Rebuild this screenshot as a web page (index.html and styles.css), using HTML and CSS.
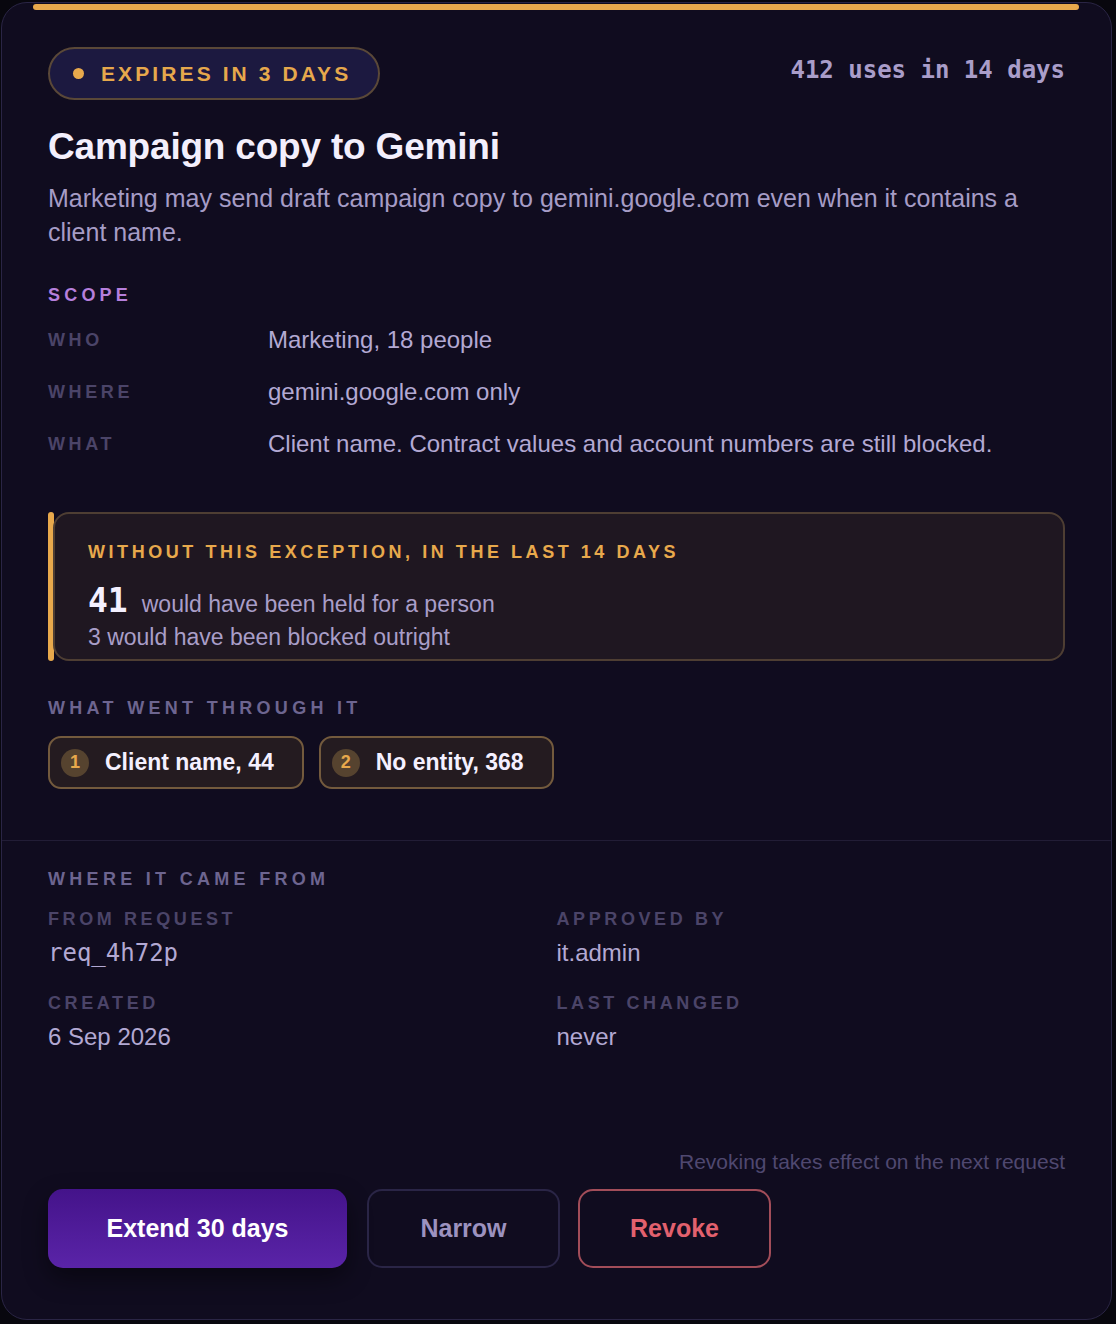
FILE: index.html
```html
<!DOCTYPE html>
<html lang="en">
<head>
<meta charset="utf-8">
<title>Campaign copy to Gemini</title>
<link rel="stylesheet" href="styles.css">
</head>
<body>
<div class="card">
  <div class="accent"></div>
  <section class="main">
    <div class="header">
      <div class="badge"><span class="dot"></span><span class="badge-text">EXPIRES IN 3 DAYS</span></div>
      <div class="uses">412 uses in 14 days</div>
    </div>
    <h1 class="title">Campaign copy to Gemini</h1>
    <p class="desc">Marketing may send draft campaign copy to gemini.google.com even when it contains a client name.</p>

    <div class="scope-heading">SCOPE</div>
    <div class="scope">
      <div class="row"><div class="label">WHO</div><div class="value">Marketing, 18 people</div></div>
      <div class="row"><div class="label">WHERE</div><div class="value">gemini.google.com only</div></div>
      <div class="row"><div class="label">WHAT</div><div class="value">Client name. Contract values and account numbers are still blocked.</div></div>
    </div>

    <div class="impact">
      <div class="impact-bar"></div>
      <div class="impact-box">
        <div class="impact-heading">WITHOUT THIS EXCEPTION, IN THE LAST 14 DAYS</div>
        <div class="impact-line1"><span class="big">41</span><span class="impact-text">would have been held for a person</span></div>
        <div class="impact-line2">3 would have been blocked outright</div>
      </div>
    </div>

    <div class="section-heading">WHAT WENT THROUGH IT</div>
    <div class="chips">
      <div class="chip"><span class="num">1</span><span class="chip-text">Client name, 44</span></div>
      <div class="chip"><span class="num">2</span><span class="chip-text">No entity, 368</span></div>
    </div>
  </section>

  <section class="origin">
    <div class="section-heading">WHERE IT CAME FROM</div>
    <div class="fields">
      <div class="field">
        <div class="flabel">FROM REQUEST</div>
        <div class="fvalue mono">req_4h72p</div>
      </div>
      <div class="field">
        <div class="flabel">APPROVED BY</div>
        <div class="fvalue">it.admin</div>
      </div>
      <div class="field">
        <div class="flabel">CREATED</div>
        <div class="fvalue">6 Sep 2026</div>
      </div>
      <div class="field">
        <div class="flabel">LAST CHANGED</div>
        <div class="fvalue">never</div>
      </div>
    </div>
  </section>

  <footer class="footer">
    <div class="note">Revoking takes effect on the next request</div>
    <div class="buttons">
      <button class="btn btn-primary">Extend 30 days</button>
      <button class="btn btn-ghost">Narrow</button>
      <button class="btn btn-danger">Revoke</button>
    </div>
  </footer>
</div>
</body>
</html>
```

FILE: styles.css
```css
* { box-sizing: border-box; }

html, body {
  margin: 0;
  padding: 0;
  background: #08070e;
}

body {
  font-family: "Liberation Sans", Arial, Helvetica, sans-serif;
  color: #b3a9d3;
}

.card {
  margin: 2px 0 0 1px;
  width: 1111px;
  height: 1318px;
  background: #100c1f;
  border: 1px solid #2a2545;
  border-radius: 26px;
  display: flex;
  flex-direction: column;
  overflow: hidden;
}

.accent {
  height: 6px;
  margin: 1px 32px 0 31px;
  background: #e8a94c;
  border-radius: 3px;
  flex-shrink: 0;
}

.main {
  padding: 37px 46px 51px 46px;
}

.header {
  display: flex;
  justify-content: space-between;
  align-items: flex-start;
}

.badge {
  display: flex;
  align-items: center;
  gap: 17px;
  height: 53px;
  padding: 0 27px 0 23px;
  border: 2px solid #5a4838;
  border-radius: 27px;
  background: #1c1940;
}

.dot {
  width: 11px;
  height: 11px;
  border-radius: 50%;
  background: #e8a94c;
}

.badge-text {
  font-size: 21px;
  font-weight: 700;
  letter-spacing: 3.1px;
  color: #e6a84c;
}

.uses {
  margin-top: 9px;
  font-family: "DejaVu Sans Mono", "Liberation Mono", monospace;
  font-weight: 700;
  font-size: 24px;
  line-height: 28px;
  color: #a99dc9;
}

.title {
  margin: 25px 0 0 0;
  font-size: 37px;
  line-height: 44px;
  font-weight: 700;
  color: #f3effc;
  letter-spacing: -0.2px;
}

.desc {
  margin: 12px 0 0 0;
  font-size: 25px;
  line-height: 34px;
  color: #a69cc6;
}

.scope-heading {
  margin-top: 35px;
  font-size: 18px;
  line-height: 22px;
  font-weight: 700;
  letter-spacing: 4.2px;
  color: #b67fdc;
}

.scope {
  margin-top: 19px;
  display: flex;
  flex-direction: column;
  gap: 22px;
}

.row {
  display: flex;
  align-items: center;
}

.label {
  width: 220px;
  flex-shrink: 0;
  font-size: 18px;
  font-weight: 700;
  letter-spacing: 3.6px;
  color: #4b4468;
}

.value {
  font-size: 24px;
  line-height: 30px;
  color: #b3a9d3;
}

.impact {
  margin-top: 53px;
  display: flex;
  height: 149px;
}

.impact-bar {
  width: 6px;
  flex-shrink: 0;
  background: #e8a94c;
  border-radius: 3px;
}

.impact-box {
  flex: 1;
  margin-left: -1px;
  background: #1f1721;
  border: 2px solid #4e3e33;
  border-radius: 16px;
  padding: 27px 34px 0 33px;
}

.impact-heading {
  font-size: 18px;
  line-height: 22px;
  font-weight: 700;
  letter-spacing: 3.55px;
  color: #e8a94c;
}

.impact-line1 {
  margin-top: 19px;
  display: flex;
  align-items: baseline;
  gap: 14px;
  line-height: 38px;
}

.big {
  font-family: "DejaVu Sans Mono", "Liberation Mono", monospace;
  font-weight: 700;
  font-size: 33px;
  color: #f4f0ff;
}

.impact-text,
.impact-line2 {
  font-size: 23px;
  color: #a99ec8;
}

.impact-line2 {
  line-height: 28px;
}

.section-heading {
  margin-top: 36px;
  font-size: 18px;
  line-height: 22px;
  font-weight: 700;
  letter-spacing: 4.3px;
  color: #6d6590;
}

.chips {
  margin-top: 17px;
  display: flex;
  gap: 15px;
}

.chip {
  display: flex;
  align-items: center;
  gap: 16px;
  height: 53px;
  padding: 0 28px 0 11px;
  border: 2px solid #735a3d;
  border-radius: 13px;
  background: #241b20;
}

.num {
  width: 28px;
  height: 28px;
  border-radius: 50%;
  background: #56432f;
  color: #e8a94c;
  font-size: 18px;
  font-weight: 700;
  display: flex;
  align-items: center;
  justify-content: center;
}

.chip-text {
  font-size: 23px;
  font-weight: 700;
  color: #f4f0ff;
}

.origin {
  border-top: 1px solid #221d36;
  padding: 5px 46px 0 46px;
}

.origin .section-heading {
  margin-top: 22px;
}

.fields {
  margin-top: 18px;
  display: grid;
  grid-template-columns: 1fr 1fr;
  row-gap: 24px;
}

.flabel {
  font-size: 18px;
  line-height: 22px;
  font-weight: 700;
  letter-spacing: 3.6px;
  color: #4b4468;
}

.fvalue {
  margin-top: 8px;
  font-size: 24px;
  line-height: 30px;
  color: #b3a9d3;
}

.fvalue.mono {
  font-family: "DejaVu Sans Mono", "Liberation Mono", monospace;
  font-size: 24px;
}

.footer {
  margin-top: auto;
  padding: 0 46px 51px 46px;
}

.note {
  text-align: right;
  font-size: 21px;
  line-height: 24px;
  color: #4f4870;
}

.buttons {
  margin-top: 15px;
  display: flex;
  gap: 20px;
}

.btn {
  height: 79px;
  padding: 0;
  font-family: "Liberation Sans", Arial, Helvetica, sans-serif;
  font-size: 25px;
  font-weight: 700;
  border-radius: 15px;
  background: transparent;
  cursor: pointer;
}

.btn-primary {
  width: 299px;
  border: none;
  color: #ffffff;
  background: linear-gradient(180deg, #44138a 0%, #5a24a8 100%);
  box-shadow: 0 10px 24px rgba(0, 0, 0, 0.45);
}

.btn-ghost {
  width: 193px;
  border: 2px solid #2a2546;
  color: #9c92bf;
}

.btn-danger {
  width: 193px;
  margin-left: -2px;
  border: 2px solid #a24d59;
  color: #e2616e;
}
```
